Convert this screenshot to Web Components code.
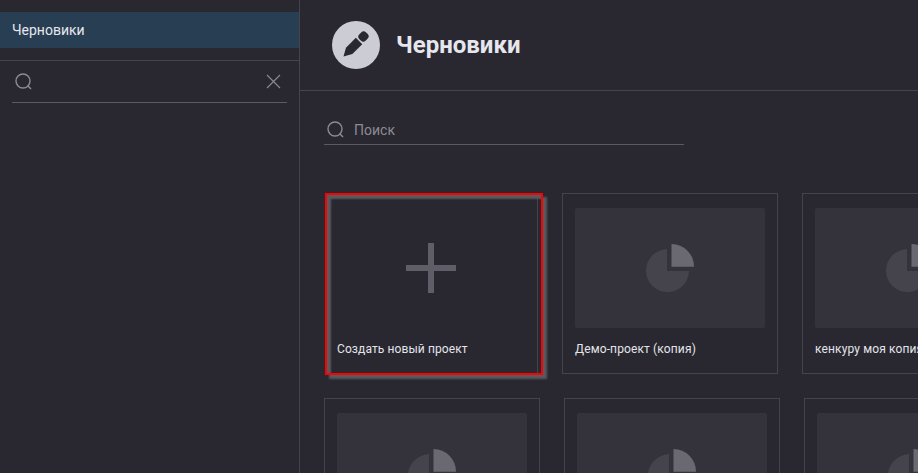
<!DOCTYPE html>
<html lang="ru">
<head>
<meta charset="utf-8">
<title>Черновики</title>
<style>
  html, body { margin: 0; height: 100%; overflow: hidden; background: #292831; }
  body { font-family: Roboto, "Liberation Sans", sans-serif; color: #e6e6ec; }
</style>
</head>
<body>
<template id="search-tpl">
  <style>
    :host { display: flex; align-items: center; box-sizing: border-box; border-bottom: 1px solid #5b5a62; color: #8c8b93; font-size: 14px; }
    svg { flex: none; display: block; }
    .text { flex: 1; }
    .icon { margin: var(--icon-margin, 0 0 0 3px); }
    .close { margin-right: 6px; display: var(--close-display, none); }
  </style>
  <svg class="icon" width="17" height="17" viewBox="0 0 17 17" fill="none" stroke="#8c8b93">
    <circle cx="8" cy="8" r="7" stroke-width="1.4"/>
    <path d="M13 13l3 3" stroke-width="1.4"/>
  </svg>
  <span class="text"><slot></slot></span>
  <svg class="close" width="15" height="15" viewBox="0 0 15 15" fill="none" stroke="#8c8b93" stroke-width="1.1">
    <path d="M1 1l13 13M14 1L1 14"/>
  </svg>
</template>

<template id="card-tpl">
  <style>
    :host { display: block; position: relative; box-sizing: border-box; flex: none; width: 216px; height: 181px; border: 1px solid #45434c; padding: 14px 12px 0; }
    .thumb { height: 120px; background: #34323b; border-radius: 2px; display: flex; align-items: center; justify-content: center; }
    .name { margin-top: 14px; font-size: 12px; letter-spacing: .13px; line-height: 14px; white-space: nowrap; color: #e4e5ea; }
  </style>
  <div class="thumb">
    <svg width="48" height="48" viewBox="0 0 48 48">
      <path fill="#45434c" d="M21 5.1A21.5 21.5 0 1 0 43 27H21Z"/>
      <path fill="#6a6871" d="M25.5 0A22.5 22.5 0 0 1 48 22.7H25.5Z"/>
    </svg>
  </div>
  <div class="name"><slot></slot></div>
</template>

<template id="new-card-tpl">
  <style>
    :host { display: block; position: relative; box-sizing: border-box; flex: none; width: 214px; height: 181px; border-right: 1px solid #45434c; padding: 14px 13px 0; }
    .plus { height: 120px; display: flex; align-items: center; justify-content: center; padding-top: 2px; box-sizing: border-box; }
    .plus svg { display: block; }
    .name { margin-top: 15px; font-size: 12px; letter-spacing: .1px; line-height: 14px; white-space: nowrap; color: #e4e5ea; }
    .mark { position: absolute; left: 1px; top: 0; width: 218px; height: 182px; box-sizing: border-box; border: 2px solid #f00; box-shadow: 4px 4px 2px #59595e, inset 4px 4px 2px #59595e; }
  </style>
  <div class="plus">
    <svg width="50" height="50" viewBox="0 0 50 50" fill="#5f5d67"><path d="M22 0h6v22h22v6H28v22h-6V28H0v-6h22Z"/></svg>
  </div>
  <div class="name"><slot></slot></div>
  <div class="mark"></div>
</template>

<template id="sidebar-tpl">
  <style>
    :host { display: block; flex: none; width: 300px; box-sizing: border-box; border-right: 1px solid #45434c; padding-top: 12px; }
    .item { height: 36px; display: flex; align-items: center; padding-left: 12px; background: #283e53; font-size: 14px; color: #e6e8ee; }
    hr { margin: 12px 0 0; border: 0; border-top: 1px solid #45434c; }
    app-search { margin: 0 12px; height: 42px; --close-display: block; }
  </style>
  <div class="item"><slot></slot></div>
  <hr>
  <app-search></app-search>
</template>

<template id="header-tpl">
  <style>
    :host { display: flex; align-items: center; gap: 16px; box-sizing: border-box; height: 91px; padding-left: 32px; border-bottom: 1px solid #45434c; }
    svg { display: block; flex: none; }
    h1 { margin: 0; font-size: 24px; font-weight: 700; color: #e6e6ee; }
  </style>
  <svg width="48" height="48" viewBox="0 0 48 48">
    <circle cx="24" cy="24" r="24" fill="#cccdd4"/>
    <g fill="#292831" transform="translate(11.5 35.5) rotate(-45)">
      <path d="M0 0L8 -4.5H22V4.5H8Z"/>
      <rect x="23.5" y="-4.5" width="9.5" height="9" rx="3.5"/>
    </g>
  </svg>
  <h1><slot></slot></h1>
</template>

<app-shell>
  <app-sidebar>Черновики</app-sidebar>
  <app-main>
    <app-header>Черновики</app-header>
    <app-search slot="search" main>Поиск</app-search>
    <new-card>Создать новый проект</new-card>
    <project-card>Демо-проект (копия)</project-card>
    <project-card>кенкуру моя копия</project-card>
  </app-main>
</app-shell>

<script>
  // each element clones its template into an open shadow root
  function define(name, tplId, css) {
    customElements.define(name, class extends HTMLElement {
      constructor() {
        super();
        const shadow = this.attachShadow({ mode: 'open' });
        if (tplId) shadow.appendChild(document.getElementById(tplId).content.cloneNode(true));
        if (css) shadow.innerHTML = css + shadow.innerHTML;
      }
    });
  }

  define('app-search', 'search-tpl');
  define('project-card', 'card-tpl');
  define('new-card', 'new-card-tpl');
  define('app-sidebar', 'sidebar-tpl');
  define('app-header', 'header-tpl');

  define('app-shell', null, '<style>:host{display:flex;height:100vh;overflow:hidden}</style><slot></slot>');

  class AppMain extends HTMLElement {
    constructor() {
      super();
      const shadow = this.attachShadow({ mode: 'open' });
      shadow.innerHTML = `
        <style>
          :host { display: block; flex: 1; min-width: 0; overflow: hidden; }
          .search { width: 360px; margin: 24px 0 48px 24px; }
          ::slotted([main]) { height: 30px; --icon-margin: 0 10px 0 3px; }
          .rows { display: flex; flex-direction: column; gap: 24px; padding-left: 24px; }
          .row { display: flex; gap: 24px; }
        </style>
        <slot name="header"></slot>
        <slot></slot>
        <div class="search"><slot name="search"></slot></div>
        <div class="rows">
          <div class="row"><slot name="first"></slot></div>
          <div class="row" id="second"></div>
        </div>`;
    }
    connectedCallback() {
      // first row comes from the light DOM, second row is placeholders with no caption
      this.querySelectorAll('new-card, project-card').forEach(el => el.slot = 'first');
      const second = this.shadowRoot.getElementById('second');
      for (let i = 0; i < 3; i++) second.appendChild(document.createElement('project-card'));
    }
  }
  customElements.define('app-main', AppMain);
</script>
</body>
</html>
